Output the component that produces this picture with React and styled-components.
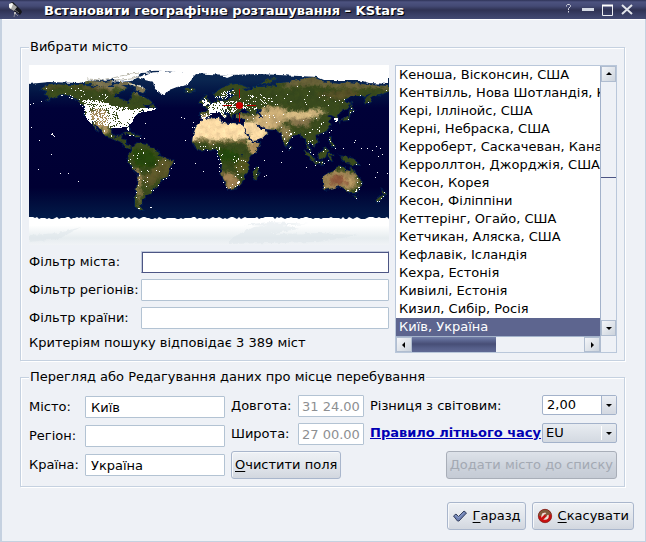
import React, { useState } from 'react';
import styled, { createGlobalStyle, css } from 'styled-components';

const GlobalStyle = createGlobalStyle`
  * {
    box-sizing: border-box;
  }

  body {
    margin: 0;
    background: #eef1f6;
    color: #000;
    font: 13px/16px 'DejaVu Sans', sans-serif;
  }

  button,
  input,
  select {
    margin: 0;
    color: inherit;
    font: inherit;
  }
`;

/* ---------- window ---------- */

const Window = styled.div`
  display: flex;
  flex-direction: column;
  min-height: 100vh;
  background: #eef1f6;
`;

const TitleBar = styled.header`
  display: flex;
  align-items: center;
  gap: 6px;
  height: 19px;
  padding: 0 13px 0 7px;
  background: linear-gradient(#2e3357 0, #4c527f 2px, #444a75 6px, #2f3253 10px, #383d63 14px, #434a72 19px);
`;

const Title = styled.h1`
  flex: 1;
  margin: 0;
  padding: 2px 0 0 15px;
  color: #fff;
  font-size: 13px;
  line-height: 16px;
  text-shadow: 1px 1px 0 #000;
  white-space: nowrap;
`;

const TitleButton = styled.button`
  display: flex;
  padding: 0;
  border: 0;
  background: none;
`;

const Content = styled.main`
  flex: 1;
  display: flex;
  flex-direction: column;
  padding: 20px 11px 11px 18px;
  border: solid #c5d1e0;
  border-width: 0 1px 1px 2px;
  box-shadow: inset 0 1px 0 #fff;
`;

const Group = styled.fieldset`
  display: grid;
  grid-template-columns: ${(p) => p.$columns};
  gap: 6px;
  min-width: 0;
  margin: 0 9px 8px 0;
  padding: ${(p) => p.$padding};
  border: 1px solid #c5d1e0;
  box-shadow: 1px 1px 0 #fff, inset 1px 1px 0 #fff;
`;

const Legend = styled.legend`
  padding: 0 1px;
  background: #eef1f6;
`;

/* ---------- form parts ---------- */

const Column = styled.div`
  display: flex;
  flex-direction: column;
  gap: 6px;
  min-width: 0;
`;

const FormGrid = styled.div`
  display: grid;
  grid-template-columns: ${(p) => p.$columns};
  grid-auto-rows: ${(p) => p.$row || '22px'};
  gap: ${(p) => p.$gap || '6px'};
  align-content: start;
  padding-top: ${(p) => p.$top || '0'};
`;

const Label = styled.label`
  line-height: 22px;
  white-space: nowrap;
`;

const Input = styled.input`
  width: 100%;
  min-width: 0;
  height: 22px;
  padding: 0 ${(p) => (p.readOnly ? '3px' : '5px')};
  border: 1px solid #b3c3d3;
  border-radius: 1px;
  background: #fff;
  color: ${(p) => (p.readOnly ? '#8d8f92' : '#000')};
  outline: none;

  ${(p) =>
    p.$active &&
    css`
      border-color: #c0c9dc #4c5584 #4c5584 #c0c9dc;
      box-shadow: inset 1px 1px 0 #4c5584;
    `}
`;

const Button = styled.button`
  display: inline-flex;
  align-items: center;
  gap: ${(p) => p.$gap || '0'};
  height: 28px;
  padding: 0 ${(p) => (p.$gap ? '4px' : '3px')};
  border: 1px solid #a9b6cc;
  border-radius: 3px;
  background: linear-gradient(#eef1f5, #e2e6ec 50%, #d2d7df);
  box-shadow: inset 1px 1px 0 #f6f8fa;
  white-space: nowrap;

  &:disabled {
    border-color: #a8aeb8;
    background: linear-gradient(#dde2e9, #cdd3dc 55%, #c5cbd5);
    box-shadow: none;
    color: #a3a9b3;
  }
`;

const Accel = styled.span`
  text-decoration: underline;
  text-underline-offset: 2px;
`;

const RuleLink = styled.a`
  color: #0000b4;
  font-weight: bold;
  line-height: 20px;
  white-space: nowrap;
`;

const ButtonRow = styled.div`
  grid-column: 1 / -1;
  display: flex;
  justify-content: space-between;
`;

const DialogButtons = styled.div`
  display: flex;
  justify-content: flex-end;
  gap: 6px;
  margin-top: auto;
`;

const Combo = styled.div`
  display: grid;
  grid-template-columns: minmax(0, 1fr) 15px;
  height: 20px;
  border: 1px solid #a3b2ca;
  border-radius: 2px;
  background: ${(p) => (p.$flat ? '#fff' : 'linear-gradient(#e8ecf1, #d3d9e1)')};
`;

const Select = styled.select`
  grid-area: 1 / 1 / 2 / 3;
  appearance: none;
  width: 100%;
  padding: 0 18px 0 ${(p) => (p.$flat ? '4px' : '3px')};
  border: 0;
  background: none;
  outline: none;
`;

const ComboArrow = styled.span`
  grid-area: 1 / 2;
  display: grid;
  place-items: center;
  margin: ${(p) => (p.$flat ? '0' : '2px 0')};
  border-left: 1px solid ${(p) => (p.$flat ? '#a3b2ca' : '#fff')};
  background: ${(p) => (p.$flat ? 'linear-gradient(#eceff4, #d3d8e1)' : 'none')};
  pointer-events: none;
`;

/* ---------- city list ---------- */

const ListFrame = styled.div`
  display: grid;
  grid-template: 270px 16px / minmax(0, 1fr) 16px;
  align-self: start;
  border: 1px solid #b9c7da;
  background: #fff;
`;

const CityList = styled.ul`
  margin: 0;
  padding: 0;
  overflow: hidden;
  list-style: none;
`;

const City = styled.li`
  height: 18px;
  padding-left: 3px;
  background: ${(p) => (p['aria-selected'] ? '#5d658f' : 'none')};
  color: ${(p) => (p['aria-selected'] ? '#fff' : '#000')};
  line-height: 18px;
  white-space: nowrap;
`;

const ScrollBar = styled.div`
  display: flex;
  flex-direction: ${(p) => (p.$vertical ? 'column' : 'row')};
  border: solid #a3b2ca;
  border-width: ${(p) => (p.$vertical ? '0 0 0 1px' : '1px 0 0 0')};
  background: #eef1f6;
`;

const ScrollButton = styled.button`
  display: grid;
  place-items: center;
  flex: 0 0 16px;
  min-width: 0;
  padding: 0;
  border: 1px solid #b0bdd0;
  background: linear-gradient(135deg, #f4f6f9, #ccd3dc);
`;

const Thumb = styled.div`
  flex: 0 0 ${(p) => p.$size};
  margin-top: ${(p) => p.$offset || '0'};
  background: ${(p) =>
    p.$vertical ? '#4c5584' : 'linear-gradient(#7480a8 0, #5d6893 3px, #474e76 7px, #555e89 11px, #5f6994 15px)'};
`;

const Track = styled.div`
  flex: 1;
`;

const Corner = styled.div`
  border-left: 1px solid #b0bdd0;
  background: #eef1f6;
`;

const Arrow = ({ dir }) => {
  const shapes = {
    up: 'M0 4h6L3 1z',
    down: 'M0 2h6L3 5z',
    left: 'M4 0v6L1 3z',
    right: 'M2 0v6L5 3z',
  };
  return (
    <svg width="6" height="6" viewBox="0 0 6 6" aria-hidden="true">
      <path d={shapes[dir]} />
    </svg>
  );
};

/* ---------- world map, one unit is one degree ---------- */

const MapSvg = styled.svg`
  display: block;
  width: 100%;
  height: auto;
`;

const toPath = (points) => {
  const n = points.split(' ').map((p) => p.split(','));
  return `M${n.map(([lon, lat]) => `${lon} ${-lat}`).join('L')}Z`;
};

const LAND = [
  // Americas
  '-168,66 -162,70 -156,71 -141,70 -128,70 -115,68 -108,68 -95,68 -94,72 -85,69 -82,67 -87,64 -94,61 -94,58 -85,55 -82,53 -80,51 -79,55 -77,57 -78,62 -72,62 -69,59 -65,59 -61,56 -56,52 -60,50 -66,50 -65,48 -61,46 -66,44 -70,43 -74,40 -76,36 -81,31 -80,26 -82,28 -84,30 -90,29 -94,29 -97,27 -98,22 -94,18 -91,19 -87,21 -88,16 -83,15 -83,10 -79,9 -77,8 -80,7 -85,9 -88,13 -94,16 -102,18 -106,22 -109,26 -113,31 -115,31 -110,23 -112,25 -115,29 -118,34 -124,40 -124,48 -130,54 -135,58 -146,61 -152,59 -158,56 -164,54 -158,58 -165,61 -162,64',
  '-77,8 -72,12 -62,10 -52,5 -50,0 -44,-3 -35,-6 -39,-13 -41,-21 -48,-26 -53,-33 -58,-35 -58,-38 -63,-40 -66,-45 -69,-51 -66,-55 -70,-55 -74,-51 -74,-43 -72,-30 -70,-19 -76,-14 -81,-6 -80,1 -77,4',
  '-85,22 -80,23 -74,20 -78,20',
  '-74,20 -69,19 -71,18 -74,18',
  '-90,73 -80,73 -68,69 -62,66 -66,62 -74,65 -72,68 -80,70 -90,70',
  '-124,74 -117,74 -105,73 -98,74 -96,70 -104,68 -115,69 -118,71 -124,71',
  '-59,48 -56,51 -53,47',
  // Africa
  '-6,36 10,37 11,33 20,31 25,32 32,31 35,28 37,21 43,12 51,12 48,5 41,-2 39,-7 40,-15 35,-20 35,-24 32,-28 27,-34 19,-35 16,-28 12,-18 13,-9 9,-1 9,4 3,6 -4,5 -8,4 -13,8 -17,14 -16,20 -13,28 -9,32',
  '44,-20 44,-16 49,-12 50,-16 47,-25 44,-24',
  // Eurasia
  '-9,37 -9,43 -2,43 -1,46 -5,48 2,51 8,54 9,57 11,54 20,55 22,57 24,59 30,60 22,60 21,63 25,65 22,66 17,62 17,58 13,55 11,59 6,58 5,62 13,66 19,70 28,71 40,67 33,66 37,64 44,66 44,68 54,68 60,69 68,68 68,72 73,72 80,73 88,75 104,78 113,74 130,71 140,73 160,70 180,69 180,65 178,63 171,60 163,59 162,55 157,51 156,57 163,62 155,59 142,59 135,54 141,52 139,47 132,43 128,40 129,36 126,35 126,38 122,40 118,39 122,37 120,34 122,30 118,24 110,21 106,20 109,13 105,9 101,13 99,10 103,2 101,4 98,9 98,16 94,17 90,22 86,20 80,15 80,10 77,8 73,17 72,21 67,25 57,26 51,30 48,30 52,25 56,25 59,22 52,16 44,13 39,21 35,28 35,36 27,37 27,41 34,42 41,41 37,45 40,47 33,46 28,42 23,40 23,37 19,42 13,46 18,40 16,38 9,44 3,43 0,39 -5,36',
  '-5,50 1,52 -2,56 -3,59 -6,57 -3,54 -5,52',
  '-10,52 -6,52 -6,55 -9,54',
  '-24,66 -15,66 -14,64 -22,63',
  '52,71 57,71 68,77 60,76',
  '142,54 143,50 144,46 142,46',
  '130,31 131,34 139,35 141,41 145,44 141,45 140,40 136,37 130,33',
  '80,9 82,7 80,6',
  // south-east Asia and Oceania
  '95,5 100,2 106,-5 104,-6 98,0',
  '105,-6 114,-7 114,-9 106,-8',
  '109,1 117,7 119,5 116,-4 110,-3',
  '119,1 125,1 121,-1 123,-5 120,-5',
  '120,18 122,18 122,14 126,8 123,8 120,14',
  '131,-1 137,-2 145,-4 150,-10 143,-9 138,-8 134,-4',
  '114,-22 122,-17 130,-12 136,-12 136,-16 140,-17 142,-11 146,-19 153,-26 151,-33 147,-38 140,-38 136,-34 131,-31 124,-33 116,-35 114,-30',
  '145,-41 148,-41 147,-43',
  '173,-35 178,-38 175,-41 174,-38',
  '172,-41 174,-42 168,-47 167,-45',
].map(toPath).join('');

const ICE = [
  '-73,78 -68,82 -30,84 -12,82 -18,76 -22,70 -32,68 -40,65 -44,60 -50,62 -54,68 -56,73 -68,76',
  '-125,76 -110,74 -98,76 -90,73 -78,74 -72,77 -60,82 -70,88 -130,88',
  '-82,72 -68,69 -62,66 -68,68 -80,71',
  '12,80 26,80 18,77',
  '-180,71 -160,73 -130,72 -122,74 -100,77 -70,83 -30,86 -12,82 0,81 20,80 50,81 90,79 108,78 115,75 150,75 160,72 180,71 180,90 -180,90',
].map(toPath).join('');

const PATCHES = [
  // tundra and dry plains
  { fill: '#554f26', d: '-168,70 -100,70 -95,63 -120,67 -145,69 -165,66' },
  { fill: '#78704e', d: '-125,76 -60,76 -60,61 -75,60 -80,66 -110,67' },
  { fill: '#a58a5c', d: '-118,46 -104,46 -98,34 -104,24 -112,29 -119,36' },
  { fill: '#b39763', d: '-112,30 -103,30 -100,22 -105,24' },
  { fill: '#5a5528', d: '-50,-4 -35,-5 -40,-20 -52,-24 -60,-35 -66,-22 -55,-14' },
  { fill: '#a98b5b', d: '-74,-14 -70,-16 -67,-22 -69,-42 -67,-52 -71,-45 -71,-28' },
  { fill: '#254508', d: '-77,5 -55,4 -50,-2 -56,-12 -72,-12' },
  // Sahara, Arabia and the Kalahari
  { fill: '#f8d8a3', d: '-20,36 10,40 36,33 39,17 15,15 -20,16' },
  { fill: '#f4d5a0', d: '34,33 48,34 60,25 52,12 42,12' },
  { fill: '#877344', d: '-18,15 15,14 38,15 36,11 12,12 -16,12' },
  { fill: '#b0905c', d: '40,13 52,13 46,0 40,3' },
  { fill: '#9a7c50', d: '12,-17 26,-19 30,-31 18,-36' },
  { fill: '#52531f', d: '26,-3 40,-4 38,-20 26,-17' },
  { fill: '#22450a', d: '9,5 28,5 29,-7 12,-6' },
  // Asia
  { fill: '#c5a873', d: '44,40 60,48 78,47 76,36 66,24 56,26 48,30' },
  { fill: '#cbb07b', d: '75,42 92,44 105,45 118,45 108,38 94,35 78,35' },
  { fill: '#85724b', d: '76,36 100,36 101,29 88,28' },
  { fill: '#8b7a4c', d: '68,32 80,29 84,20 76,12 72,22' },
  { fill: '#655e36', d: '70,75 105,80 180,72 180,66 140,67 100,69 78,68' },
  { fill: '#554f26', d: '105,60 140,66 155,62 130,55' },
  { fill: '#8e8155', d: '-8,42 0,42 -2,37 -8,37' },
  { fill: '#8d7a4c', d: '27,41 48,41 46,35 30,36' },
  // Australia
  { fill: '#9d8253', d: '112,-18 130,-15 148,-20 150,-33 130,-35 112,-34' },
  { fill: '#8b553a', d: '120,-22 136,-21 137,-30 122,-29' },
  { fill: '#c3a36b', d: '136,-24 144,-24 142,-32 137,-31' },
];

const LAKES = [
  '47,45 53,46 51,42 54,37 50,37 49,41',
  '-90,47 -84,47 -85,46',
  '-88,45 -86,42 -88,42',
  '32,0 34,0 33,-2',
].map(toPath).join('');

// small repeatable generator, so the dots stay put between renders
const makeRandom = (start) => {
  let seed = start;
  return () => {
    seed = (seed * 16807) % 2147483647;
    return seed / 2147483647;
  };
};

const inside = (x, y, poly) => {
  let hit = false;
  for (let i = 0, j = poly.length - 1; i < poly.length; j = i, i += 1) {
    const [xi, yi] = poly[i];
    const [xj, yj] = poly[j];
    if (yi > y !== yj > y && x < ((xj - xi) * (y - yi)) / (yj - yi) + xi) hit = !hit;
  }
  return hit;
};

const CLUSTERS = [
  { density: 0.5, area: '-125,55 -112,55 -97,52 -97,29 -108,31 -119,33 -125,42' },
  { density: 0.6, area: '-126,56 -112,56 -97,51 -97,48 -124,48' },
  { density: 0.75, area: '-100,50 -82,49 -77,46 -70,48 -70,43 -75,38 -78,33 -81,29 -88,28 -100,28' },
  { density: 0.8, area: '-92,45 -76,46 -74,40 -77,33 -88,33' },
  { density: 0.8, area: '-124,51 -121,51 -117,32 -122,36' },
  { density: 0.85, area: '-76,46 -66,48 -53,48 -54,46 -64,44 -72,43' },
  { density: 0.8, area: '-83,30 -80,30 -80,25 -82,27' },
  { density: 0.05, area: '-165,68 -130,68 -100,62 -98,52 -126,54 -140,60' },
  { density: 0.5, area: '-152,61 -146,61 -130,54 -124,49 -126,49 -136,58' },
  { density: 0.1, area: '-108,26 -97,26 -92,16 -83,9 -78,8 -88,13' },
  { density: 0.12, area: '-84,22 -64,19 -60,12 -61,11 -67,17 -78,19' },
  { density: 0.02, area: '-79,8 -60,9 -37,-8 -50,-28 -62,-40 -72,-35 -72,-17 -80,-4' },
  { density: 0.8, area: '-6,50 1,51 1,53 -2,56 -4,58 -7,56' },
  { density: 0.4, area: '-9,43 0,43 3,42 -1,37 -8,37' },
  { density: 0.85, area: '-1,49 4,53 14,55 18,50 14,45 8,43 0,43' },
  { density: 0.4, area: '8,46 14,45 18,40 16,38 12,42' },
  { density: 0.35, area: '14,54 27,56 40,50 38,46 28,45 20,41 14,45' },
  { density: 0.25, area: '5,59 12,64 24,66 30,62 20,59 14,56' },
  { density: 0.13, area: '27,60 50,62 68,58 60,50 40,45 30,52' },
  { density: 0.03, area: '60,62 135,60 140,48 110,50 60,50' },
  { density: 0.05, area: '40,42 75,42 72,33 36,33' },
  { density: 0.06, area: '68,30 90,26 80,8 74,15' },
  { density: 0.03, area: '92,40 118,38 121,25 106,20 105,10 98,12' },
  { density: 0.9, area: '125,38 129,38 130,35 126,34' },
  { density: 0.3, area: '132,35 140,36 141,40 138,37' },
  { density: 0.07, area: '-17,15 -10,6 9,4 14,10' },
  { density: 0.08, area: '24,0 38,0 34,-20 30,-31 20,-34 26,-20' },
  { density: 0.3, area: '26,-24 31,-24 31,-29 27,-28' },
  { density: 0.16, area: '8,3 14,3 12,-16 18,-32 15,-29 10,-14' },
  { density: 0.1, area: '144,-17 153,-27 151,-36 145,-39 143,-37 150,-30' },
];

// towns that stand alone: islands, coasts and outposts
const TOWNS =
  '-178,28 -170,15 -158,21 -157,21 -156,20 -155,19 -157,22 -179,51 -176,52 -168,54 -158,1 -149,-18 -141,-18 -131,-26 -171,-14 -64,32 -28,38 -25,37 -17,28 -15,28 -16,33 -24,15 -14,-8 -6,-16 -58,-52 -59,-52 -70,-53 -71,-53 -73,-42 -73,-37 -71,-30 -70,-24 -70,-20 -77,-12 -79,-8 -81,-5 -35,-8 -38,-13 -40,-20 -43,-23 -46,-24 -51,-30 -56,-35 -58,-35 -22,64 -18,66 -52,64 -45,61 -69,77 55,-21 57,-20 55,-5 45,-13 47,-19 49,-12 73,4 72,-7 97,-12 106,-10 115,-32 131,-12 139,-35 138,-35 147,-43 175,-37 174,-41 172,-43 170,-46 168,-46 178,-18 166,-22 168,-17 160,-9 147,-9 145,13 146,15 134,7 152,7 158,7 163,5 171,7 173,1 167,9 169,-1 144,44 141,43 142,47 159,53 177,65 151,60 100,64 88,69 104,1 107,-6 113,-7 101,3 100,6 121,14 124,10 120,16 126,7 116,6 114,4 115,-8 119,-5 110,-7 122,25 120,23 114,22 80,7 81,8';

const buildDots = () => {
  const random = makeRandom(4211);
  const dots = TOWNS.split(' ').map((t) => t.split(',').map(Number));
  CLUSTERS.forEach(({ density, area }) => {
    const poly = area.split(' ').map((p) => p.split(',').map(Number));
    const xs = poly.map((p) => p[0]);
    const ys = poly.map((p) => p[1]);
    for (let y = Math.min(...ys); y <= Math.max(...ys); y += 1) {
      for (let x = Math.min(...xs); x <= Math.max(...xs); x += 1) {
        if (inside(x + 0.5, y + 0.5, poly) && random() < density) dots.push([x, y]);
      }
    }
  });
  return dots.map(([x, y]) => `M${x} ${-y}h1v1h-1z`).join('');
};

const buildShelf = () => {
  const random = makeRandom(77);
  let d = 'M-180 90';
  for (let x = -180; x <= 180; x += 2) {
    d += `L${x} ${62 + Math.round(random() * 2)}`;
  }
  return `${d}L180 90Z`;
};

const DOTS = buildDots();
const SHELF = buildShelf();

const WorldMap = () => (
  <MapSvg viewBox="-180 -90 360 180" role="img" aria-label="Карта світу">
    <defs>
      <linearGradient id="ocean" x1="0" y1="0" x2="0" y2="1">
        <stop offset="0.08" stopColor="#0a2650" />
        <stop offset="0.16" stopColor="#021343" />
        <stop offset="0.24" stopColor="#000138" />
        <stop offset="0.68" stopColor="#000033" />
        <stop offset="0.78" stopColor="#01103f" />
        <stop offset="0.86" stopColor="#021c4a" />
      </linearGradient>
      <linearGradient id="shelf" x1="0" y1="0" x2="0" y2="1">
        <stop offset="0.3" stopColor="#fff" />
        <stop offset="0.75" stopColor="#e6ecef" />
        <stop offset="1" stopColor="#f0f3f6" />
      </linearGradient>
      <clipPath id="land">
        <path d={LAND} />
      </clipPath>
      <filter id="coast" x="-2%" y="-2%" width="104%" height="104%">
        <feTurbulence type="fractalNoise" baseFrequency="0.22" numOctaves="3" seed="4" />
        <feDisplacementMap in="SourceGraphic" scale="4" xChannelSelector="R" yChannelSelector="G" />
      </filter>
      <filter id="soil" x="-5%" y="-5%" width="110%" height="110%" colorInterpolationFilters="sRGB">
        <feGaussianBlur in="SourceGraphic" stdDeviation="1.6" result="soft" />
        <feTurbulence type="fractalNoise" baseFrequency="0.16" numOctaves="4" seed="9" result="noise" />
        <feDisplacementMap in="soft" in2="noise" scale="8" xChannelSelector="R" yChannelSelector="G" result="moved" />
        <feColorMatrix in="noise" values="0.9 0 0 0 0.05  0.9 0 0 0 0.05  0.9 0 0 0 0.05  0 0 0 0 1" result="grain" />
        <feComposite in="moved" in2="grain" operator="arithmetic" k1="0.3" k2="0.87" />
      </filter>
    </defs>
    <rect x="-180" y="-90" width="360" height="180" fill="url(#ocean)" />
    <g filter="url(#coast)">
      <path d={LAND} fill="none" stroke="#0b3468" strokeWidth="2" opacity="0.4" />
      <g clipPath="url(#land)">
        <g filter="url(#soil)">
          <rect x="-190" y="-95" width="380" height="190" fill="#37481b" />
          {PATCHES.map((patch) => (
            <path key={patch.d} d={toPath(patch.d)} fill={patch.fill} />
          ))}
        </g>
      </g>
      <path d={LAKES} fill="#05184a" />
      <path d={ICE} fill="#fff" />
    </g>
    <path d="M-180 -90H180V-79L120 -80L60 -82H-20L-60 -85L-110 -79L-180 -74Z" fill="#fff" />
    <g fill="none" stroke="#b9b7aa" filter="url(#coast)">
      <path d="M-122 -76L-108 -75L-96 -77L-84 -80L-70 -82" />
      <path d="M-98 -73L-88 -75L-78 -76L-70 -79" />
    </g>
    <path d={SHELF} fill="url(#shelf)" />
    <path
      d="M-180 80L-150 78L-128 72L-150 84L-180 87ZM20 84L45 72L70 69L90 74L60 79L110 78L150 80L110 87L20 89ZM35 70L60 67L100 69L60 71Z"
      fill="#dde5ea"
      opacity="0.5"
      filter="url(#coast)"
    />
    <path d={DOTS} fill="#fff" shapeRendering="crispEdges" />
    <path d="M14 -50h9v1h-9zM38 -50h9v1h-9zM30 -66h1v9h-1zM30 -42h1v9h-1z" fill="#b40000" shapeRendering="crispEdges" />
    <circle cx="30.5" cy="-49.5" r="3.6" fill="#c80000" />
  </MapSvg>
);

/* ---------- icons ---------- */

const TelescopeIcon = () => (
  <svg width="16" height="16" viewBox="0 0 16 16" aria-hidden="true">
    <path d="M8 10l-1 5M8 11l3 3M8 10v3" stroke="#85868f" fill="none" />
    <path d="M3 1l3-1 8 8 1 2-2 3-3-2-8-5z" fill="#15161b" />
    <path d="M2 2l3-1 5 4-3 4-5-3z" fill="#a8a8a5" />
    <path d="M2 2l3-1 1 1-2 5-2-2z" fill="#fafaf5" />
    <path d="M8 8l4 3" stroke="#6a6b70" />
    <circle cx="8" cy="11" r="1" fill="#d0d0d0" />
  </svg>
);

const CheckIcon = () => (
  <svg width="16" height="16" viewBox="0 0 16 16" aria-hidden="true">
    <path
      d="M1.500 8L4 6L6.500 8.500L12 3L14.500 5L7 13L5.500 13Z"
      fill="#6d80b3"
      stroke="#36415f"
      strokeLinejoin="round"
    />
    <path d="M3 8l1-.5 2.500 2.500L12 4.500" fill="none" stroke="#8fa0ca" />
  </svg>
);

const CancelIcon = () => (
  <svg width="16" height="16" viewBox="0 0 16 16" aria-hidden="true">
    <circle cx="8" cy="8" r="5.300" fill="#eadcd6" stroke="#c81010" strokeWidth="3" />
    <path d="M2.700 8A5.300 5.300 0 0 1 13 6.500" fill="none" stroke="#805a3c" strokeWidth="3" />
    <path d="M4 12L9 7" stroke="#c81010" strokeWidth="2.600" />
    <path d="M8.500 7.500L12 4" stroke="#805a3c" strokeWidth="2.400" />
    <circle cx="8" cy="8" r="6.700" fill="none" stroke="#7d1a12" strokeWidth="0.700" />
  </svg>
);

const TITLE_BUTTONS = [
  {
    name: 'Довідка',
    icon: <path d="M2.500 3.500V2.500l1-1h2l1 1v1L4.500 5.500V7M4.500 8v1.500" stroke="#d6d8e2" fill="none" />,
    width: 12,
  },
  { name: 'Згорнути', icon: <path d="M0 6.500h12" stroke="#d5dae4" strokeWidth="3" />, width: 13 },
  {
    name: 'Розгорнути',
    icon: (
      <>
        <path d="M1.500 3V12.500H11.500V3" fill="none" stroke="#eceef2" />
        <path d="M1 2.500h11" stroke="#fff" strokeWidth="2" />
      </>
    ),
    width: 14,
  },
  { name: 'Закрити', icon: <path d="M1 2L11 11M11 2L1 11" stroke="#e1e4ea" strokeWidth="2" />, width: 12 },
];

const CITIES = [
  'Кеноша, Вісконсин, США',
  'Кентвілль, Нова Шотландія, Канада',
  'Кері, Іллінойс, США',
  'Керні, Небраска, США',
  'Керроберт, Саскачеван, Канада',
  'Керроллтон, Джорджія, США',
  'Кесон, Корея',
  'Кесон, Філіппіни',
  'Кеттерінг, Огайо, США',
  'Кетчикан, Аляска, США',
  'Кефлавік, Ісландія',
  'Кехра, Естонія',
  'Кивіилі, Естонія',
  'Кизил, Сибір, Росія',
  'Київ, Україна',
];

const App = () => {
  const [selected, setSelected] = useState('Київ, Україна');

  return (
    <>
      <GlobalStyle />
      <Window>
        <TitleBar>
          <TelescopeIcon />
          <Title>Встановити географічне розташування – KStars</Title>
          {TITLE_BUTTONS.map((b) => (
            <TitleButton key={b.name} type="button" aria-label={b.name}>
              <svg width={b.width} height="13" viewBox={`0 0 ${b.width} 13`}>
                {b.icon}
              </svg>
            </TitleButton>
          ))}
        </TitleBar>

        <Content>
          <Group $columns="minmax(0, 1fr) 222px" $padding="10px 7px 7px 8px">
            <Legend>Вибрати місто</Legend>
            <Column>
              <WorldMap />
              <FormGrid $columns="106px minmax(0, 1fr)">
                <Label htmlFor="cityFilter">Фільтр міста:</Label>
                <Input id="cityFilter" $active />
                <Label htmlFor="regionFilter">Фільтр регіонів:</Label>
                <Input id="regionFilter" />
                <Label htmlFor="countryFilter">Фільтр країни:</Label>
                <Input id="countryFilter" />
              </FormGrid>
              <div>Критеріям пошуку відповідає 3 389 міст</div>
            </Column>

            <ListFrame>
              <CityList role="listbox" aria-label="Міста">
                {CITIES.map((city) => (
                  <City
                    key={city}
                    role="option"
                    aria-selected={city === selected}
                    onClick={() => setSelected(city)}
                  >
                    {city}
                  </City>
                ))}
              </CityList>
              <ScrollBar $vertical>
                <ScrollButton type="button" aria-label="Вгору">
                  <Arrow dir="up" />
                </ScrollButton>
                <Thumb $vertical $size="1px" $offset="95px" />
                <Track />
                <ScrollButton type="button" aria-label="Вниз">
                  <Arrow dir="down" />
                </ScrollButton>
              </ScrollBar>
              <ScrollBar>
                <ScrollButton type="button" aria-label="Ліворуч">
                  <Arrow dir="left" />
                </ScrollButton>
                <Thumb $size="84px" />
                <Track />
                <ScrollButton type="button" aria-label="Праворуч">
                  <Arrow dir="right" />
                </ScrollButton>
              </ScrollBar>
              <Corner />
            </ListFrame>
          </Group>

          <Group $columns="minmax(0, 1fr) 386px" $padding="10px 7px 7px 8px">
            <Legend>Перегляд або Редагування даних про місце перебування</Legend>
            <FormGrid $columns="50px minmax(0, 1fr)" $gap="7px 6px" $top="1px">
              <Label htmlFor="city">Місто:</Label>
              <Input id="city" defaultValue="Київ" />
              <Label htmlFor="region">Регіон:</Label>
              <Input id="region" />
              <Label htmlFor="country">Країна:</Label>
              <Input id="country" defaultValue="Україна" />
            </FormGrid>

            <FormGrid $columns="61px 66px minmax(0, 1fr) 75px" $row="auto">
              <Label htmlFor="longitude">Довгота:</Label>
              <Input id="longitude" readOnly value="31 24.00" />
              <Label htmlFor="offset">Різниця з світовим:</Label>
              <Combo $flat>
                <Select id="offset" $flat defaultValue="2,00">
                  <option>2,00</option>
                  <option>3,00</option>
                </Select>
                <ComboArrow $flat>
                  <Arrow dir="down" />
                </ComboArrow>
              </Combo>
              <Label htmlFor="latitude">Широта:</Label>
              <Input id="latitude" readOnly value="27 00.00" />
              <RuleLink href="#rules">Правило літнього часу</RuleLink>
              <Combo>
                <Select aria-label="Правило літнього часу" defaultValue="EU">
                  <option>EU</option>
                  <option>US</option>
                </Select>
                <ComboArrow>
                  <Arrow dir="down" />
                </ComboArrow>
              </Combo>
              <ButtonRow>
                <Button type="button">
                  <Accel>О</Accel>чистити поля
                </Button>
                <Button type="button" disabled>
                  Додати місто до списку
                </Button>
              </ButtonRow>
            </FormGrid>
          </Group>

          <DialogButtons>
            <Button type="submit" $gap="5px">
              <CheckIcon />
              <span>
                <Accel>Г</Accel>аразд
              </span>
            </Button>
            <Button type="button" $gap="5px">
              <CancelIcon />
              <span>
                <Accel>С</Accel>касувати
              </span>
            </Button>
          </DialogButtons>
        </Content>
      </Window>
    </>
  );
};

export default App;
